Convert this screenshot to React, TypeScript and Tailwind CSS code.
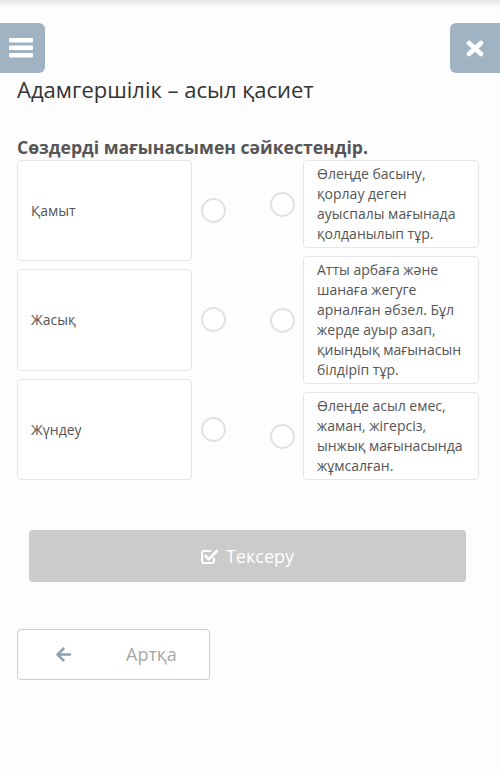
import { FaArrowLeft } from 'react-icons/fa'

const leftWords = ['Қамыт', 'Жасық', 'Жүндеу']

const rightMeanings = [
  'Өлеңде басыну, қорлау деген ауыспалы мағынада қолданылып тұр.',
  'Атты арбаға және шанаға жегуге арналған әбзел. Бұл жерде ауыр азап, қиындық мағынасын білдіріп тұр.',
  'Өлеңде асыл емес, жаман, жігерсіз, ынжық мағынасында жұмсалған.',
]

function Radio() {
  return <span className="block w-[25px] h-[25px] shrink-0 rounded-full border-[2.5px] border-[#e2e2e2] bg-white" />
}

function MenuIcon() {
  return (
    <svg width="24" height="20" viewBox="0 0 24 20">
      <rect x="0" y="0" width="24" height="4.5" rx="1" fill="white" />
      <rect x="0" y="7.5" width="24" height="4.5" rx="1" fill="white" />
      <rect x="0" y="15" width="24" height="4.5" rx="1" fill="white" />
    </svg>
  )
}

function CloseIcon() {
  return (
    <svg width="20" height="17" viewBox="0 0 20 17">
      <path d="M4 3 L16 14 M16 3 L4 14" stroke="white" strokeWidth="4.6" strokeLinecap="round" />
    </svg>
  )
}

function CheckSquareIcon() {
  return (
    <svg width="18" height="17" viewBox="0 0 18 17" fill="none">
      <path d="M13 9.5 V13 a2 2 0 0 1 -2 2 H3 a2 2 0 0 1 -2 -2 V5 a2 2 0 0 1 2 -2 H10" stroke="white" strokeWidth="2" />
      <path d="M4.5 8 L7.8 11.2 L16 3" stroke="white" strokeWidth="2.6" strokeLinecap="round" strokeLinejoin="round" />
    </svg>
  )
}

export default function App() {
  return (
    <div className="min-h-[775px] bg-[#fdfdfd] font-['Open_Sans',sans-serif] relative">
      {/* top shadow of the app bar */}
      <div className="h-[7px] bg-gradient-to-b from-[#e4e4e4] to-[#fdfdfd]" />

      <div className="flex justify-between mt-[16px]">
        <button className="w-[45px] h-[50px] rounded-r-[6px] bg-[#9fb3c2] flex items-center justify-center">
          <span className="-ml-[4px]"><MenuIcon /></span>
        </button>
        <button className="w-[50px] h-[50px] rounded-l-[6px] bg-[#9fb3c2] flex items-center justify-center">
          <CloseIcon />
        </button>
      </div>

      <h1 className="px-[17px] mt-[1px] text-[22px] leading-[30px] text-[#333] font-normal">
        Адамгершілік – асыл қасиет
      </h1>

      <h2 className="px-[17px] mt-[31px] text-[17.6px] leading-[24px] font-bold text-[#565656]">
        Сөздерді мағынасымен сәйкестендір.
      </h2>

      {/* matching area */}
      <div className="flex justify-between pl-[17px] pr-[21px] mt-[1px]">
        <div className="flex flex-col gap-[8px]">
          {leftWords.map((w) => (
            <div key={w} className="flex flex-1 items-center gap-[8.5px]">
              <div className="w-[175px] h-full flex items-center px-[13px] bg-white border border-[#e6e6e6] rounded-[4px] text-[14px] text-[#555]">
                {w}
              </div>
              <Radio />
            </div>
          ))}
        </div>
        <div className="flex flex-col gap-[8px]">
          {rightMeanings.map((m, i) => (
            <div key={i} className="flex items-center gap-[8.5px]">
              <Radio />
              <div className="w-[176px] px-[13px] py-[3px] bg-white border border-[#e6e6e6] rounded-[4px] text-[14px] leading-[20px] text-[#555]">
                {m}
              </div>
            </div>
          ))}
        </div>
      </div>

      <div className="px-[29px] pr-[34px] mt-[50px]">
        <button className="w-full h-[52px] rounded-[4px] bg-[#cbcbcb] flex items-center justify-center gap-[7px] text-white text-[18px]">
          <CheckSquareIcon />
          <span>Тексеру</span>
        </button>
      </div>

      <div className="px-[17px] mt-[47px]">
        <button className="w-[193px] h-[51px] rounded-[4px] border border-[#c9ced3] bg-white flex items-center text-[18px] text-[#a8a8a8]">
          <FaArrowLeft className="ml-[37px] text-[#8e9fae]" size={17} />
          <span className="ml-[54px]">Артқа</span>
        </button>
      </div>
    </div>
  )
}
